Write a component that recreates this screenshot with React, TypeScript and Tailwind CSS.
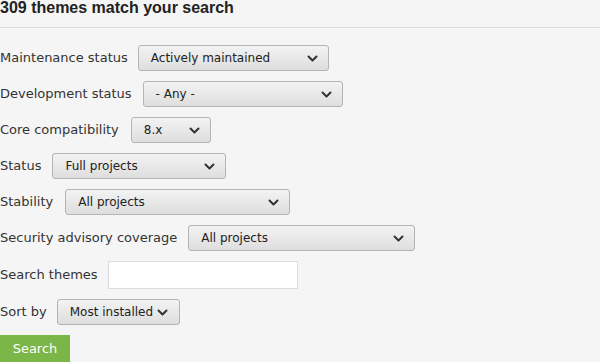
import React from 'react';

const Chevron: React.FC = () => (
  <svg className="w-[11px] h-[7px] shrink-0" viewBox="0 0 11 7" fill="none">
    <path d="M1.5 1.5l4 4 4-4" stroke="#333" strokeWidth={2} strokeLinecap="round" strokeLinejoin="round" />
  </svg>
);

interface SelectProps {
  value:  string;
  width:  string;
  pr?:    string;
}

const FakeSelect: React.FC<SelectProps> = ({ value, width, pr = 'pr-[10px]' }) => (
  <div
    className={`${width} ${pr} h-[26px] flex items-center justify-between pl-[12px] rounded-[3px]
      border border-[#b4b4b4] bg-gradient-to-b from-[#f3f3f3] to-[#dedede] text-[#222] text-[12px]`}
  >
    <span className="whitespace-nowrap">{value}</span>
    <Chevron />
  </div>
);

const rows = [
  { label: 'Maintenance status',         value: 'Actively maintained', width: 'w-[191px]', gap: 'gap-[10px]' },
  { label: 'Development status',         value: '- Any -',             width: 'w-[200px]', gap: 'gap-[11px]' },
  { label: 'Core compatibility',         value: '8.x',                 width: 'w-[80px]',  gap: 'gap-[12px]' },
  { label: 'Status',                     value: 'Full projects',       width: 'w-[174px]', gap: 'gap-[11px]' },
  { label: 'Stability',                  value: 'All projects',        width: 'w-[225px]', gap: 'gap-[12px]' },
  { label: 'Security advisory coverage', value: 'All projects',        width: 'w-[227px]', gap: 'gap-[11px]' },
];

export default function App() {
  return (
    <div className="w-[600px] h-[362px] overflow-hidden bg-[#f5f5f5] text-[#333] font-['DejaVu_Sans',sans-serif]">
      <h2 className="h-[28px] border-b border-[#dcdcdc] font-['Liberation_Sans',Arial,sans-serif] font-bold text-[16px] leading-[16px] text-[#222]">
        309 themes match your search
      </h2>

      <form className="pt-[17px] flex flex-col gap-[10px]" onSubmit={e => e.preventDefault()}>
        {rows.map(r => (
          <div key={r.label} className={`flex items-center ${r.gap} text-[13px]`}>
            <label className="whitespace-nowrap">{r.label}</label>
            <FakeSelect value={r.value} width={r.width} />
          </div>
        ))}

        <div className="flex items-center gap-[10px] text-[13px]">
          <label className="whitespace-nowrap">Search themes</label>
          <div className="w-[190px] h-[28px] bg-white border border-[#dcdcdc]" />
        </div>

        <div className="flex items-center gap-[10px] text-[13px]">
          <label className="whitespace-nowrap">Sort by</label>
          <FakeSelect value="Most installed" width="w-[123px]" pr="pr-[11px]" />
        </div>

        <div>
          <button type="submit" className="w-[70px] h-[28px] bg-[#7ab648] text-white text-[13px] text-center">
            Search
          </button>
        </div>
      </form>
    </div>
  );
}
